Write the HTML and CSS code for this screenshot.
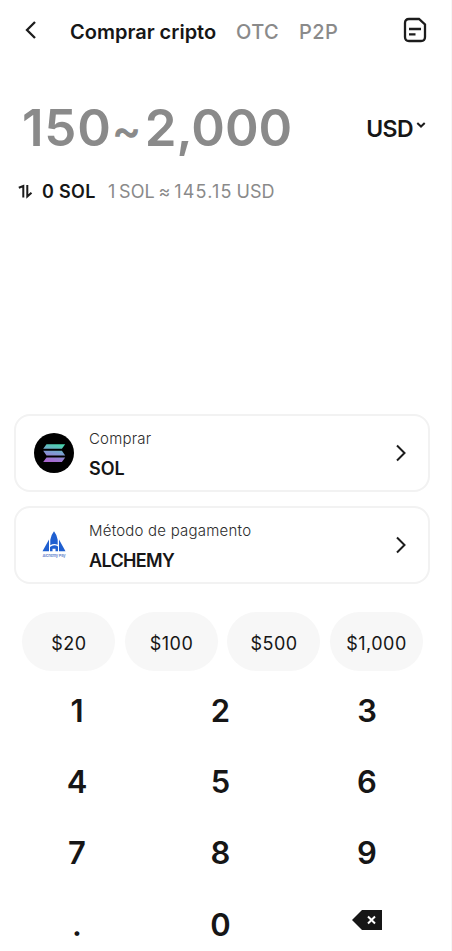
FILE: index.html
```html
<!DOCTYPE html>
<html lang="pt">
<head>
<meta charset="utf-8">
<title>Comprar cripto</title>
<link rel="stylesheet" href="styles.css">
</head>
<body>
<main class="screen">
  <header class="header">
    <svg class="back" width="14" height="20" viewBox="0 0 14 20"><path d="M11 2 3 10l8 8"/></svg>
    <nav class="tabs">
      <span class="tab tab-active">Comprar cripto</span>
      <span class="tab tab-otc">OTC</span>
      <span class="tab tab-p2p">P2P</span>
    </nav>
    <svg class="orders" width="24" height="26" viewBox="0 0 24 26"><path d="M6 2h10l6 5.500V20q0 4-4 4H6q-4 0-4-4V6q0-4 4-4ZM6 12h12M6 17.300h6.500"/></svg>
  </header>
  <section class="amount">
    <span class="range"><span class="low">150</span><span class="tilde">~</span>2,000</span>
    <span class="currency">USD</span>
    <svg class="caret" width="10" height="8" viewBox="0 0 10 8"><path d="m1.300 2 3.700 3.500L8.700 2"/></svg>
  </section>
  <section class="rate">
    <svg class="swap" width="15" height="15" viewBox="0 0 15 15"><path d="M.8 3.800 5.300 2v11.500M9.300 1v11.500l4.200-3.800"/></svg>
    <span class="receive">0 SOL</span>
    <span class="quote">1 SOL ≈ <span class="price">145.15</span> USD</span>
  </section>
  <section class="cards">
    <div class="card">
      <svg class="logo" width="40" height="40" viewBox="0 0 40 40">
        <defs><linearGradient id="sol" gradientUnits="userSpaceOnUse" x1="23" y1="11" x2="19" y2="29"><stop offset="0" stop-color="#48d5ac"/><stop offset=".5" stop-color="#7f9bd3"/><stop offset="1" stop-color="#a866cf"/></linearGradient></defs>
        <circle cx="20" cy="20" r="20"/>
        <path fill="url(#sol)" d="M12.500 11.200h18.700l-3.300 4.600H9.200ZM9.200 17.800h18.700l3.300 4.600H12.500ZM12.500 24.400h18.700l-3.300 4.600H9.200Z"/>
      </svg>
      <div class="info"><span class="label label-buy">Comprar</span><strong class="value value-sol">SOL</strong></div>
      <svg class="chevron" width="12" height="18" viewBox="0 0 12 18"><path d="m2 1.500 7.500 7.500L2 16.500"/></svg>
    </div>
    <div class="card">
      <svg class="logo" width="40" height="40" viewBox="0 0 40 40">
        <g fill="#1f5fd0"><path d="M20 6.200q3.200 4 3.700 8.500v5q-4-1.500-7.400.5v-5.500q.5-4.500 3.700-8.500ZM15 14.500v11.700H8.500ZM25 14.500l6.500 11.700H25ZM16 26.200V22q4-3 8-.5v4.700h-2.500v-2.500h-3v2.500Z"/></g>
        <text class="brand" x="8.500" y="32" textLength="23">Alchemy Pay</text>
      </svg>
      <div class="info"><span class="label label-method">Método de pagamento</span><strong class="value value-method">ALCHEMY</strong></div>
      <svg class="chevron" width="12" height="18" viewBox="0 0 12 18"><path d="m2 1.500 7.500 7.500L2 16.500"/></svg>
    </div>
  </section>
  <section class="presets">
    <span class="preset">$20</span><span class="preset">$100</span><span class="preset">$500</span><span class="preset">$1,000</span>
  </section>
  <section class="keypad">
    <span>1</span><span>2</span><span>3</span>
    <span>4</span><span>5</span><span>6</span>
    <span>7</span><span>8</span><span>9</span>
    <span>.</span><span>0</span>
    <span><svg class="delete" width="30" height="20" viewBox="0 0 30 20"><path fill="#161616" d="M10 0h20v20H10L0 10Z"/><path d="m16 6.500 7 7m0-7-7 7" stroke="#fff" stroke-width="2"/></svg></span>
  </section>
</main>
</body>
</html>
```

FILE: styles.css
```css
* { box-sizing: border-box; }
body { margin: 0; background: #fff; color: #161616; font-family: Inter, "Liberation Sans", sans-serif; }
svg { flex: none; display: block; fill: none; stroke: #1c1c1c; stroke-width: 2; }
.screen { width: 452px; height: 951px; overflow: hidden; border-right: 1px solid #f6f6f6; white-space: nowrap; }
.header { display: flex; align-items: center; height: 64px; padding: 0 24px 0 24px; }
.back { margin-bottom: 4px; stroke-width: 2.3; }
.tabs { display: flex; flex: 1; padding-left: 32px; font-size: 20px; line-height: 24px; }
.tab { color: #8a8a8a; font-weight: 500; }
.tab-active { width: 166px; color: #161616; font-weight: 600; }
.tab-otc { width: 63px; letter-spacing: .4px; }
.tab-p2p { letter-spacing: .4px; }
.orders { margin-bottom: 5px; stroke-width: 2.3; }
.amount { display: flex; align-items: center; height: 64px; margin-top: 31px; padding: 0 25px 0 22px; }
.range { flex: 1; padding-top: 3px; color: #8a8a8a; font-size: 51px; font-weight: 600; line-height: 64px; }
.low { letter-spacing: .8px; }
.tilde { display: inline-block; width: 33px; font-size: 44px; }
.currency { margin: 3px 3px 0 0; font-size: 23px; font-weight: 600; letter-spacing: -.6px; }
.caret { margin-bottom: 4px; stroke-width: 2; }
.rate { display: flex; align-items: center; height: 32px; margin-top: 16px; padding-left: 18px; font-size: 18px; }
.swap { stroke-width: 2; }
.receive { width: 66px; margin-left: 9px; font-weight: 600; letter-spacing: .3px; }
.quote { color: #8a8a8a; word-spacing: -1.500px; letter-spacing: .1px; }
.price { letter-spacing: 1.200px; }
.cards { display: grid; gap: 14px; margin-top: 207px; padding: 0 21px 0 14px; }
.card { display: flex; align-items: center; height: 78px; padding: 0 21px 0 18px; border: 2px solid #f2f2f2; border-radius: 16px; }
.logo { stroke: none; fill: #000; }
.brand { fill: #6484cd; font-size: 4px; font-weight: 600; }
.info { display: grid; flex: 1; gap: 10px; margin: 2px 0 0 15px; line-height: 20px; }
.label { font-size: 15px; font-weight: 350; color: #2c2c2c; }
.label-buy { letter-spacing: .2px; }
.label-method { letter-spacing: .22px; }
.value { font-size: 18px; font-weight: 600; }
.value-method { letter-spacing: -.65px; }
.chevron { stroke-width: 2; }
.presets { display: grid; grid-template-columns: repeat(4, 93px); gap: 9.500px; margin-top: 28px; padding-left: 22px; }
.preset { display: flex; align-items: center; justify-content: center; height: 59px; padding: 3px 0 0 1px; border-radius: 30px; background: #f7f7f7; font-size: 18px; letter-spacing: .5px; }
.keypad { display: grid; grid-template-columns: 142px 145px 148px; grid-auto-rows: 71.200px; margin-top: 4px; padding-left: 6px; font-size: 31px; font-weight: 600; }
.keypad span { display: flex; align-items: center; justify-content: center; }
.delete { margin-bottom: 8px; stroke: none; }
```
